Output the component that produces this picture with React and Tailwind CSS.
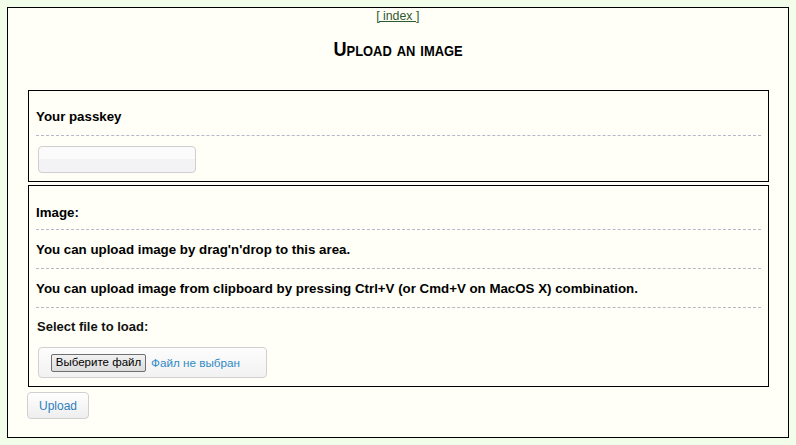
import React from 'react';

const sans = { fontFamily: '"Liberation Sans", Arial, sans-serif' };

export default function App() {
    return (
        <div className="min-h-[445px] bg-[#f3feea] pt-[7px] pl-[7px]" style={sans}>
            <div className="w-[782px] h-[431px] border border-black bg-[#fffff7]">
                <div className="pt-[1px] flex justify-center">
                    <a href="#" className="block scale-x-[0.95] text-[13px] leading-[14px] text-[#2f5a2f] underline">[ index ]</a>
                </div>

                <div className="mt-[14px] flex justify-center">
                    <h1 className="scale-x-[0.86] text-[21px] leading-[24px] font-bold text-black [font-variant:small-caps]">
                        Upload an image
                    </h1>
                </div>

                <div className="ml-[20px] mt-[29px] w-[741px] border border-black px-[7px] pb-[8px]">
                    <div className="pt-[18px] pb-[10px] text-[13.3px] leading-[16px] font-bold text-black border-b border-dashed border-[#b4b8c8]">
                        Your passkey
                    </div>
                    <div className="pt-[10px] pl-[2px]">
                        <input
                            type="password"
                            className="block w-[158px] h-[27px] rounded-[4px] border border-[#cfcfcf] bg-gradient-to-b from-[#fbfbfb] from-50% to-[#f3f3f5] to-50% outline-none"
                        />
                    </div>
                </div>

                <div className="ml-[20px] mt-[3px] w-[741px] border border-black px-[7px] pb-[8px]">
                    <div className="pt-[19px] pb-[8px] text-[13.3px] leading-[16px] font-bold text-black border-b border-dashed border-[#b4b8c8]">
                        Image:
                    </div>
                    <div className="pt-[12px] pb-[10px] text-[13.3px] leading-[16px] font-bold text-black border-b border-dashed border-[#b4b8c8]">
                        You can upload image by drag'n'drop to this area.
                    </div>
                    <div className="pt-[12px] pb-[10px] text-[13.3px] leading-[16px] font-bold text-black border-b border-dashed border-[#b4b8c8]">
                        You can upload image from clipboard by pressing Ctrl+V (or Cmd+V on MacOS X) combination.
                    </div>
                    <div className="pt-[11px] pl-[1px] text-[13px] leading-[16px] font-bold text-[#111]">
                        Select file to load:
                    </div>
                    <div className="mt-[12px] ml-[2px] w-[229px] h-[31px] rounded-[4px] border border-[#d0d0d0] bg-gradient-to-b from-[#fdfdfd] to-[#f2f2f2] flex items-center pl-[12px] gap-[5px]">
                        <span className="h-[18px] w-[95px] flex items-center justify-center rounded-[2px] border border-[#707070] bg-gradient-to-b from-[#f2f2f2] to-[#dcdcdc] text-[11.5px] text-black">
                            Выберите файл
                        </span>
                        <span className="text-[11.7px] text-[#2f8bc6]">Файл не выбран</span>
                    </div>
                </div>

                <button
                    type="button"
                    className="ml-[19px] mt-[5px] w-[62px] h-[27px] rounded-[4px] border border-[#d0d0d0] bg-gradient-to-b from-[#ffffff] to-[#eeeeee] text-[12px] text-[#2f7fbe]"
                >
                    Upload
                </button>
            </div>
        </div>
    );
}
